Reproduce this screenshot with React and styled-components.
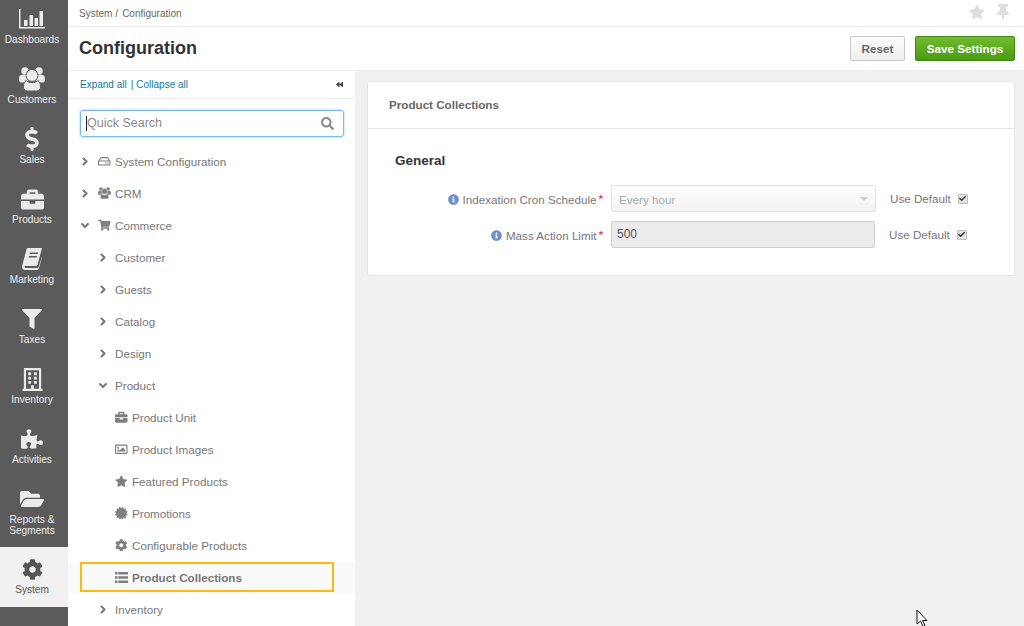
import React from 'react';
import styled, { createGlobalStyle } from 'styled-components';
import {
  FaDollarSign,
  FaBriefcase,
  FaFilter,
  FaRegBuilding,
  FaPuzzlePiece,
  FaFolderOpen,
  FaCog,
  FaStar,
  FaThumbtack,
  FaBackward,
  FaSearch,
  FaAngleRight,
  FaAngleDown,
  FaRegHdd,
  FaShoppingCart,
  FaRegImage,
  FaCertificate,
  FaInfoCircle,
  FaCheck,
} from 'react-icons/fa';

const GlobalStyle = createGlobalStyle`
  html, body {
    margin: 0;
    height: 100%;
    overflow: hidden;
    background: #f1f1f1;
    font-family: 'Liberation Sans', Arial, sans-serif;
    font-size: 11.65px;
  }
  #root { height: 100%; }
`;

const Page = styled.div`
  display: flex;
  height: 626px;
  position: relative;
  overflow: hidden;
`;

const Nav = styled.nav`
  width: 68px;
  flex: none;
  padding-top: 7px;
  box-sizing: border-box;
  background: #5b5b5b;
`;

const NavItem = styled.div`
  height: 60px;
  box-sizing: border-box;
  padding: ${({ $active }) => ($active ? '10px' : '0')} 4px 0 0;
  background: ${({ $active }) => ($active ? '#f1f1f1' : 'transparent')};
  color: ${({ $active }) => ($active ? '#555' : '#eee')};
  display: flex;
  flex-direction: column;
  align-items: center;
`;

const NavIcon = styled.div`
  height: 24px;
  margin-bottom: 2.5px;
  display: flex;
  align-items: center;
  justify-content: center;
  font-size: ${({ $size }) => $size || 22}px;
  color: ${({ $active }) => ($active ? '#555' : '#ebebeb')};
`;

const NavLabel = styled.div`
  font-size: 10.1px;
  line-height: 11px;
  text-align: center;
`;

const Main = styled.div`
  flex: 1;
  min-width: 0;
  display: flex;
  flex-direction: column;
`;

const Crumbs = styled.div`
  height: 27px;
  box-sizing: border-box;
  border-bottom: 1px solid #ededed;
  background: #fff;
  padding: 0 13px 0 11px;
  display: flex;
  align-items: center;
  justify-content: space-between;
  font-size: 10px;
  color: #666;
`;

const CrumbSep = styled.span`
  margin: 0 4px 0 3px;
`;

const PageTools = styled.div`
  display: flex;
  align-items: center;
  gap: 10px;
  margin-bottom: 3px;
  font-size: 16px;
  color: #dedede;
`;

const TitleBar = styled.div`
  height: 44px;
  box-sizing: border-box;
  border-bottom: 1px solid #ededed;
  background: #fff;
  padding: 0 9px 0 11px;
  display: flex;
  align-items: center;
  justify-content: space-between;
`;

const Title = styled.h1`
  margin: 0;
  font-size: 18px;
  font-weight: bold;
  color: #333;
`;

const Actions = styled.div`
  display: flex;
  gap: 10px;
`;

const Button = styled.button`
  height: 25px;
  width: ${({ $width }) => $width}px;
  padding: 0;
  border-radius: 2px;
  font-family: inherit;
  font-size: 11.7px;
  font-weight: bold;
  border: 1px solid ${({ $primary }) => ($primary ? '#3f8a12' : '#c9c9c9')};
  color: ${({ $primary }) => ($primary ? '#fff' : '#666')};
  background: ${({ $primary }) =>
    $primary ? 'linear-gradient(#72bb2e, #4a9a14)' : 'linear-gradient(#fcfcfc, #eeeeee)'};
`;

const Body = styled.div`
  flex: 1;
  min-height: 0;
  display: flex;
`;

const Sidebar = styled.aside`
  width: 287px;
  flex: none;
  background: #fff;
  overflow: hidden;
`;

const TreeTools = styled.div`
  height: 28px;
  box-sizing: border-box;
  border-bottom: 1px solid #ededed;
  padding: 0 12px;
  display: flex;
  align-items: center;
  justify-content: space-between;
  font-size: 10px;
  color: #0f7a9c;
`;

const ToolSep = styled.span`
  margin: 0 3px 0 4px;
`;

const CollapseIcon = styled(FaBackward)`
  font-size: 7px;
  color: #444;
`;

const SearchBox = styled.div`
  position: relative;
  margin: 11px 11px 8px 12px;
  height: 27px;
  box-sizing: border-box;
  border: 1px solid #7ab8ee;
  border-radius: 3px;
  box-shadow: 0 0 3px rgba(100, 170, 235, 0.6);
  display: flex;
  align-items: center;
  padding: 0 9px 0 6px;
`;

const SearchInput = styled.input`
  flex: 1;
  min-width: 0;
  border: 0;
  outline: 0;
  padding: 0 0 2px;
  font-family: inherit;
  font-size: 12.5px;
  color: #555;
  &::placeholder {
    color: #8b8b8b;
    opacity: 1;
  }
`;

const Caret = styled.span`
  position: absolute;
  left: 5px;
  top: 5px;
  width: 1px;
  height: 15px;
  background: #222;
`;

const SearchIcon = styled(FaSearch)`
  font-size: 13px;
  color: #8a8a8a;
`;

const Row = styled.div`
  height: 32px;
  box-sizing: border-box;
  display: flex;
  align-items: center;
  padding-left: ${({ $level }) => [11, 29, 47][$level]}px;
  color: #777;
`;

const ActiveRow = styled.div`
  height: 32px;
  box-sizing: border-box;
  padding: 1px 21px 1px 12px;
  background: #fafafa;
`;

const ActiveFrame = styled.div`
  height: 30px;
  box-sizing: border-box;
  border: 2px solid #fdbb0e;
  display: flex;
  align-items: center;
  padding-left: 33px;
  font-weight: bold;
  color: #777;
`;

const Chevron = styled.span`
  width: 12px;
  flex: none;
  display: flex;
  justify-content: center;
  font-size: 13px;
  color: #777;
`;

const TreeIcon = styled.span`
  width: 13px;
  margin-left: ${({ $leaf }) => ($leaf ? 0 : 7)}px;
  margin-right: 4px;
  flex: none;
  display: flex;
  justify-content: center;
  font-size: 12.5px;
  color: #7f7f7f;
`;

const ChildLabel = styled.span`
  margin-left: 6px;
`;

const Content = styled.main`
  flex: 1;
  min-width: 0;
  padding: 10px 9px 0 12px;
  background: #f1f1f1;
`;

const Card = styled.section`
  height: 195px;
  box-sizing: border-box;
  background: #fff;
  border: 1px solid #e6e6e6;
  border-radius: 3px;
`;

const CardHeader = styled.div`
  height: 47px;
  box-sizing: border-box;
  border-bottom: 1px solid #e4e4e4;
  padding: 0 0 2px 21px;
  display: flex;
  align-items: center;
  font-weight: bold;
  color: #666;
`;

const CardBody = styled.div`
  padding: 22px 0 0 27px;
`;

const SectionTitle = styled.h2`
  margin: 0 0 15px;
  font-size: 13.5px;
  line-height: 19px;
  font-weight: bold;
  color: #333;
`;

const FormRow = styled.div`
  display: flex;
  align-items: center;
  height: 27px;
  margin-bottom: 9px;
  margin-left: -27px;
`;

const FieldLabel = styled.label`
  width: 236px;
  box-sizing: border-box;
  flex: none;
  margin-right: 7px;
  padding: 1px 1px 0 0;
  display: flex;
  justify-content: flex-end;
  align-items: center;
  color: #777;
`;

const Required = styled.span`
  color: #d8005a;
  margin-left: 2px;
  position: relative;
  top: -1px;
`;

const InfoIcon = styled(FaInfoCircle)`
  font-size: 11px;
  color: #6f8fc9;
  margin-right: 4px;
`;

const SelectBox = styled.div`
  width: 265px;
  height: 27px;
  box-sizing: border-box;
  border: 1px solid #e2e2e2;
  border-radius: 2px;
  background: linear-gradient(#ffffff, #f2f2f2);
  display: flex;
  align-items: center;
  justify-content: space-between;
  padding: 1px 7px 0;
  color: #aaa;
`;

const Triangle = styled.span`
  border-left: 4px solid transparent;
  border-right: 4px solid transparent;
  border-top: 4px solid #ccc;
`;

const ValueInput = styled.input`
  width: 264px;
  height: 27px;
  box-sizing: border-box;
  border: 1px solid #d0d0d0;
  border-radius: 2px;
  background: #ececec;
  padding: 0 5px 2px;
  font-family: inherit;
  font-size: 12px;
  color: #555;
`;

const UseDefault = styled.div`
  margin-left: 14px;
  display: flex;
  align-items: center;
  gap: 7px;
  color: #777;
`;

const CheckMark = styled.span`
  width: 10px;
  height: 10px;
  box-sizing: border-box;
  border: 1px solid #bdbdbd;
  border-radius: 1px;
  background: #e3e3e3;
  display: flex;
  align-items: center;
  justify-content: center;
  font-size: 7px;
  color: #333;
`;

const Pointer = styled.svg`
  position: absolute;
  left: 916px;
  top: 609px;
`;

const BarChartIcon = () => (
  <svg width="26" height="20" viewBox="0 0 26 20" fill="#ebebeb">
    <path d="M0 0h1.5v18H26v1.5H0z" />
    <path d="M5 11h3.5v6H5zM10.5 6H14v11h-3.5zM15.5 9H19v8h-3.5zM20.5 2H24v15h-3.5z" />
  </svg>
);

const BookIcon = () => (
  <svg width="20" height="22" viewBox="0 0 20 22" fill="#ebebeb">
    <path d="M6 0h14l-4.400 16.500c-.3 1-1 1.500-2 1.500H3.500c-.8 0-1.200.5-1 1.200.2.600.7.800 1.300.8h11.600c.6 0 1-.3 1.200-.9L20 8.500v1L16.800 20.500c-.3 1-1 1.500-2 1.500H3c-1.800 0-3-1.500-3-3.200 0-.6.100-1 .3-1.500L4.500 1.500C4.800.500 5.200 0 6 0z" />
    <path fill="#5b5b5b" d="M8 4.500h8l-.4 1.500h-8zM7 8h8l-.4 1.500h-8z" />
  </svg>
);

const UsersIcon = ({ size, gap }) => (
  <svg width={size} height={(size * 24) / 26} viewBox="0 0 26 24" fill="currentColor">
    <circle cx="6" cy="4" r="3.700" />
    <circle cx="20" cy="4" r="3.700" />
    <path d="M1 8.500c1.500-1 6-1 8 0v7H3c-1.500 0-3-.5-3-2.500 0-2 .2-3.600 1-4.500zM25 8.500c-1.500-1-6-1-8 0v7h6c1.500 0 3-.5 3-2.500 0-2-.2-3.600-1-4.500z" />
    <path
      d="M7 13.500c1.500 1.500 4 2 6 2s4.500-.5 6-2c1.500 1 2.500 3 2.500 6.500 0 2.500-1.500 4-4 4h-9c-2.500 0-4-1.500-4-4 0-3.500 1-5.500 2.500-6.500z"
      stroke={gap}
      strokeWidth="1"
    />
    <circle cx="13" cy="8.500" r="6" stroke={gap} strokeWidth="1" />
  </svg>
);

const ListIcon = () => (
  <svg width="13" height="11" viewBox="0 0 13 11" fill="currentColor">
    <path d="M0 0h2.500v2.500H0zM3.300 0H13v2.500H3.300zM0 4.200h2.500v2.500H0zM3.300 4.200H13v2.500H3.300zM0 8.400h2.500V11H0zM3.300 8.400H13V11H3.300z" />
  </svg>
);

const navItems = [
  { label: 'Dashboards', icon: <BarChartIcon /> },
  { label: 'Customers', icon: <UsersIcon size={26} gap="#5b5b5b" /> },
  { label: 'Sales', icon: <FaDollarSign />, size: 24 },
  { label: 'Products', icon: <FaBriefcase />, size: 23 },
  { label: 'Marketing', icon: <BookIcon /> },
  { label: 'Taxes', icon: <FaFilter />, size: 20 },
  { label: 'Inventory', icon: <FaRegBuilding />, size: 23 },
  { label: 'Activities', icon: <FaPuzzlePiece />, size: 22 },
  { label: ['Reports &', 'Segments'], icon: <FaFolderOpen />, size: 24 },
  { label: 'System', icon: <FaCog />, size: 21, active: true },
];

const topRows = [
  { label: 'System Configuration', icon: <FaRegHdd /> },
  { label: 'CRM', icon: <UsersIcon size={13} gap="#fff" /> },
  { label: 'Commerce', icon: <FaShoppingCart />, open: true },
];

const groupRows = ['Customer', 'Guests', 'Catalog', 'Design'];

const productRows = [
  { label: 'Product Unit', icon: <FaBriefcase /> },
  { label: 'Product Images', icon: <FaRegImage /> },
  { label: 'Featured Products', icon: <FaStar /> },
  { label: 'Promotions', icon: <FaCertificate /> },
  { label: 'Configurable Products', icon: <FaCog /> },
];

const App = () => (
  <>
    <GlobalStyle />
    <Page>
      <Nav>
        {navItems.map(({ label, icon, size, active }) => (
          <NavItem key={String(label)} $active={active}>
            <NavIcon $size={size} $active={active}>
              {icon}
            </NavIcon>
            <NavLabel>
              {Array.isArray(label) ? label.map((line) => <div key={line}>{line}</div>) : label}
            </NavLabel>
          </NavItem>
        ))}
      </Nav>
      <Main>
        <Crumbs>
          <span>
            System<CrumbSep>/</CrumbSep>Configuration
          </span>
          <PageTools>
            <FaStar />
            <FaThumbtack />
          </PageTools>
        </Crumbs>
        <TitleBar>
          <Title>Configuration</Title>
          <Actions>
            <Button $width={55}>Reset</Button>
            <Button $width={100} $primary>
              Save Settings
            </Button>
          </Actions>
        </TitleBar>
        <Body>
          <Sidebar>
            <TreeTools>
              <span>
                Expand all<ToolSep>|</ToolSep>Collapse all
              </span>
              <CollapseIcon />
            </TreeTools>
            <SearchBox>
              <SearchInput placeholder="Quick Search" />
              <Caret />
              <SearchIcon />
            </SearchBox>
            {topRows.map(({ label, icon, open }) => (
              <Row key={label} $level={0}>
                <Chevron>{open ? <FaAngleDown /> : <FaAngleRight />}</Chevron>
                <TreeIcon>{icon}</TreeIcon>
                {label}
              </Row>
            ))}
            {groupRows.map((label) => (
              <Row key={label} $level={1}>
                <Chevron>
                  <FaAngleRight />
                </Chevron>
                <ChildLabel>{label}</ChildLabel>
              </Row>
            ))}
            <Row $level={1}>
              <Chevron>
                <FaAngleDown />
              </Chevron>
              <ChildLabel>Product</ChildLabel>
            </Row>
            {productRows.map(({ label, icon }) => (
              <Row key={label} $level={2}>
                <TreeIcon $leaf>{icon}</TreeIcon>
                {label}
              </Row>
            ))}
            <ActiveRow>
              <ActiveFrame>
                <TreeIcon $leaf>
                  <ListIcon />
                </TreeIcon>
                Product Collections
              </ActiveFrame>
            </ActiveRow>
            <Row $level={1}>
              <Chevron>
                <FaAngleRight />
              </Chevron>
              <ChildLabel>Inventory</ChildLabel>
            </Row>
          </Sidebar>
          <Content>
            <Card>
              <CardHeader>Product Collections</CardHeader>
              <CardBody>
                <SectionTitle>General</SectionTitle>
                <FormRow>
                  <FieldLabel>
                    <InfoIcon />
                    Indexation Cron Schedule<Required>*</Required>
                  </FieldLabel>
                  <SelectBox>
                    Every hour
                    <Triangle />
                  </SelectBox>
                  <UseDefault>
                    Use Default
                    <CheckMark>
                      <FaCheck />
                    </CheckMark>
                  </UseDefault>
                </FormRow>
                <FormRow>
                  <FieldLabel>
                    <InfoIcon />
                    Mass Action Limit<Required>*</Required>
                  </FieldLabel>
                  <ValueInput defaultValue="500" />
                  <UseDefault>
                    Use Default
                    <CheckMark>
                      <FaCheck />
                    </CheckMark>
                  </UseDefault>
                </FormRow>
              </CardBody>
            </Card>
          </Content>
        </Body>
      </Main>
      <Pointer width="13" height="18" viewBox="0 0 13 18">
        <path d="M1 1v14l3.500-3 2.500 5.500 2-1-2.500-5H11z" fill="#fff" stroke="#111" strokeWidth="1" />
      </Pointer>
    </Page>
  </>
);

export default App;
